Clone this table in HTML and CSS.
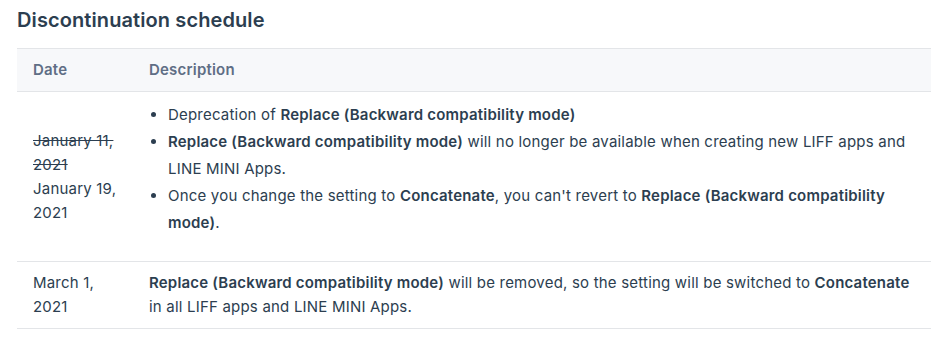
FILE: index.html
```html
<!DOCTYPE html>
<html lang="en">
<head>
<meta charset="utf-8">
<title>Discontinuation schedule</title>
<link rel="stylesheet" href="styles.css">
</head>
<body>
<section class="section">
  <h3 class="title">Discontinuation schedule</h3>
  <table class="schedule">
    <thead>
      <tr>
        <th class="col-date">Date</th>
        <th>Description</th>
      </tr>
    </thead>
    <tbody>
      <tr>
        <td class="col-date"><del>January 11, 2021</del><br>January 19, 2021</td>
        <td>
          <ul class="list">
            <li>Deprecation of <strong>Replace (Backward compatibility mode)</strong></li>
            <li><strong>Replace (Backward compatibility mode)</strong> will no longer be available when creating new LIFF apps and LINE MINI Apps.</li>
            <li>Once you change the setting to <strong>Concatenate</strong>, you can't revert to <strong>Replace (Backward compatibility mode)</strong>.</li>
          </ul>
        </td>
      </tr>
      <tr>
        <td class="col-date">March 1, 2021</td>
        <td><strong>Replace (Backward compatibility mode)</strong> will be removed, so the setting will be switched to <strong>Concatenate</strong> in all LIFF apps and LINE MINI Apps.</td>
      </tr>
    </tbody>
  </table>
</section>
</body>
</html>
```

FILE: styles.css
```css
html, body {
  margin: 0;
  padding: 0;
  background: #ffffff;
}
body {
  font-family: Inter, "Noto Sans", sans-serif;
  color: #2c3e50;
  font-size: 15px;
}
.section {
  padding: 6px 8px 0 17px;
}
.title {
  margin: 0 0 14px;
  font-size: 20px;
  font-weight: 600;
  line-height: 28px;
  letter-spacing: 0.1px;
  color: #2c3e50;
}
.schedule {
  width: 914px;
  border-collapse: collapse;
  letter-spacing: 0.2px;
}
.schedule th {
  text-align: left;
  font-weight: 600;
  color: #5f6e85;
  background: #f7f8fa;
  padding: 10px 16px;
  line-height: 22px;
  border-top: 1px solid #e3e5e8;
  border-bottom: 1px solid #e3e5e8;
}
.schedule td {
  padding: 9px 16px;
  line-height: 24px;
  vertical-align: middle;
  border-bottom: 1px solid #e3e5e8;
}
.schedule .col-date {
  width: 84px;
}
.schedule strong {
  font-weight: 600;
}
.list {
  margin: 0 0 16px;
  padding-left: 19px;
}
.list li {
  line-height: 27px;
}
```
